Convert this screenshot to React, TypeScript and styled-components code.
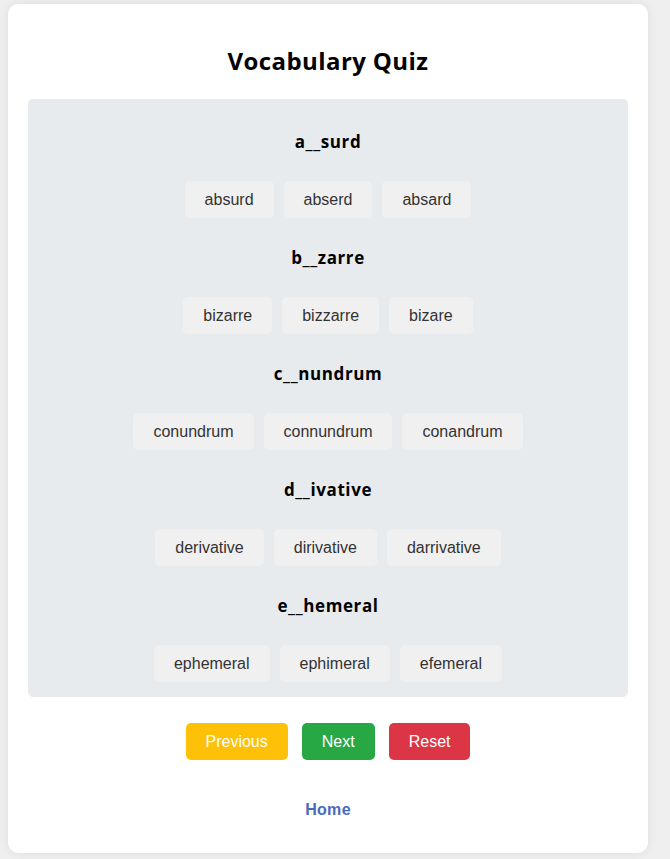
import React from "react";
import styled, { createGlobalStyle } from "styled-components";

const Global = createGlobalStyle`
  html, body { margin: 0; padding: 0; }
  body {
    background: #efefef;
    font-family: "Liberation Sans", Arial, sans-serif;
  }
`;

const Card = styled.div`
  width: 640px;
  box-sizing: border-box;
  margin: 4px 8px 6px;
  background: #ffffff;
  border-radius: 10px;
  box-shadow: 0 0 10px rgba(0, 0, 0, 0.08);
  padding: 20px 20px 33px;
  display: flex;
  flex-direction: column;
  align-items: stretch;
`;

const Title = styled.h1`
  margin: 19px 0 20px;
  font-family: "Open Sans", sans-serif;
  font-weight: 700;
  font-size: 24px;
  line-height: 36px;
  letter-spacing: 0.4px;
  color: #000;
  text-align: center;
`;

const Panel = styled.div`
  background: #e8ebee;
  border-radius: 5px;
  padding: 31px 20px 15px;
  display: flex;
  flex-direction: column;
  gap: 28px;
`;

const Question = styled.div`
  display: flex;
  flex-direction: column;
  align-items: center;
  gap: 27px;
`;

const Prompt = styled.div`
  font-family: "Open Sans", sans-serif;
  font-weight: 700;
  font-size: 17px;
  line-height: 24px;
  letter-spacing: 0.6px;
  color: #000;
`;

const Options = styled.div`
  display: flex;
  justify-content: center;
  gap: 10px;
`;

const OptionButton = styled.button`
  height: 37px;
  padding: 0 20px;
  border: none;
  border-radius: 5px;
  background: #f0f0f0;
  color: #333;
  font-family: "Liberation Sans", Arial, sans-serif;
  font-size: 16px;
  cursor: pointer;
`;

const Nav = styled.div`
  display: flex;
  justify-content: center;
  gap: 14px;
  margin-top: 26px;
`;

const NavButton = styled.button<{ $bg: string }>`
  height: 37px;
  padding: 0 20px;
  border: none;
  border-radius: 5px;
  background: ${(p) => p.$bg};
  color: #fff;
  font-family: "Liberation Sans", Arial, sans-serif;
  font-size: 16px;
  cursor: pointer;
`;

const HomeLink = styled.a`
  align-self: center;
  margin-top: 40px;
  font-family: "Liberation Sans", Arial, sans-serif;
  font-weight: 700;
  font-size: 16px;
  line-height: 20px;
  letter-spacing: 0.3px;
  color: #4a69bd;
  text-decoration: none;
`;

const questions = [
  { prompt: "a__surd", options: ["absurd", "abserd", "absard"] },
  { prompt: "b__zarre", options: ["bizarre", "bizzarre", "bizare"] },
  { prompt: "c__nundrum", options: ["conundrum", "connundrum", "conandrum"] },
  { prompt: "d__ivative", options: ["derivative", "dirivative", "darrivative"] },
  { prompt: "e__hemeral", options: ["ephemeral", "ephimeral", "efemeral"] },
];

export default function App() {
  return (
    <>
      <Global />
      <Card>
        <Title>Vocabulary Quiz</Title>
        <Panel>
          {questions.map((q) => (
            <Question key={q.prompt}>
              <Prompt>{q.prompt}</Prompt>
              <Options>
                {q.options.map((o) => (
                  <OptionButton key={o}>{o}</OptionButton>
                ))}
              </Options>
            </Question>
          ))}
        </Panel>
        <Nav>
          <NavButton $bg="#ffc107">Previous</NavButton>
          <NavButton $bg="#28a745">Next</NavButton>
          <NavButton $bg="#dc3545">Reset</NavButton>
        </Nav>
        <HomeLink href="#">Home</HomeLink>
      </Card>
    </>
  );
}
